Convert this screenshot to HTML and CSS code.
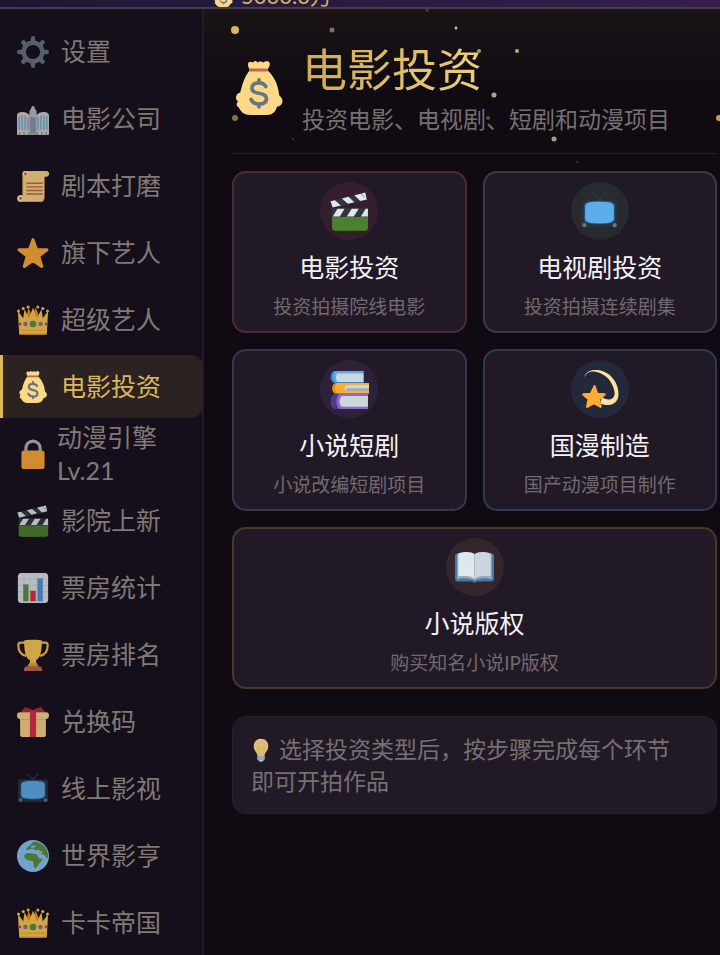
FILE: index.html
```html
<!DOCTYPE html>
<html lang="zh-CN">
<head>
    <meta charset="UTF-8">
    <meta name="viewport" content="width=device-width, initial-scale=1.0">
    <title>电影投资</title>
    <link rel="stylesheet" href="styles.css">
</head>
<body>
    <!-- 图标库 -->
    <svg class="sprite" aria-hidden="true">
        <symbol id="i-gear" viewBox="0 0 36 36">
            <circle cx="18" cy="18" r="10.5" fill="none" stroke="#66757f" stroke-width="5"/>
            <path d="M18 6V2.500M18 30v3.500M6 18H2.500M30 18h3.500M9.500 9.500L7.200 7.200M26.500 9.500l2.300-2.300M9.500 26.500l-2.300 2.300M26.500 26.500l2.300 2.300" stroke="#66757f" stroke-width="5" stroke-linecap="round"/>
        </symbol>
        <symbol id="i-building" viewBox="0 0 36 36">
            <path fill="#d5cdc6" d="M0 14c0-3 3-4 6-4 4 0 6 1 7 3h10c1-2 3-3 7-3 3 0 6 1 6 4v21a1 1 0 0 1-1 1H1a1 1 0 0 1-1-1z"/>
            <path fill="#99aab5" d="M14 12h8v24h-8z"/>
            <path fill="#b6bdc5" d="M14 9c0-1 1.500-1 2-3.500a2 2 0 0 1 4 0c.500 2.500 2 2.500 2 3.500v7h-8z"/>
            <path stroke="#7fb2dc" stroke-width="1.900" d="M2.500 15v15M5.800 14v16M9.100 14v16M12.300 16v14M23.700 16v14M26.900 14v16M30.200 14v16M33.500 15v15"/>
            <path stroke="#7d8b96" stroke-width="1" d="M16 16v17M18 16v17M20 16v17"/>
            <path stroke="#6d8fae" stroke-width="1.300" d="M3 33v3M8 33v3M13 33v3M23 33v3M28 33v3M33 33v3"/>
        </symbol>
        <symbol id="i-scroll" viewBox="0 0 36 36">
            <path fill="#e6aa5f" d="M9 1h23c3 0 4 2 4 3.500S35 8 32 8h-1v23c0 3-1 5-4 5H4c-3 0-4-2-4-4s1.500-4 4-4h2V4c0-2 1-3 3-3z"/>
            <path fill="#ffd983" d="M9 1h23c3 0 4 1.500 4 3s-1 3-4 3h-1.500v22c0 4-1 6-4 6H5c2 0 2-2 2-4V5c0-2 0-4 2-4z"/>
            <circle cx="4" cy="32" r="3.500" fill="#ffe8b6"/><circle cx="4" cy="32" r="1.600" fill="#c1694f"/>
            <circle cx="9.500" cy="4.500" r="3" fill="#ffe8b6"/><circle cx="9.500" cy="4.500" r="1.600" fill="#c1694f"/>
            <path stroke="#c1694f" stroke-width="1.600" d="M10.500 15H29M10.500 19H29M10.500 23H29M10.500 27H29"/>
        </symbol>
        <symbol id="i-star" viewBox="0 0 36 36">
            <path fill="#ffac33" stroke="#ffac33" stroke-width="3.500" stroke-linejoin="round" d="M18 3l4 11 11.700.4-9.200 7.100 3.300 11.500L18 26.500 8.200 33l3.300-11.500-9.200-7.100L14 14z"/>
        </symbol>
        <symbol id="i-crown" viewBox="0 0 36 36">
            <path fill="#f4900c" d="M10 16L13 4l4 10 4-10 5 12z"/>
            <path fill="#ffcc4d" d="M2.500 34L1 8l6 8 1.500-10 5 10L18 4l4.500 12 5-10L29 16l6-8-1.500 26z"/>
            <circle cx="1.700" cy="8" r="1.700" fill="#ffcc4d"/><circle cx="7" cy="5" r="1.700" fill="#ffcc4d"/><circle cx="12.500" cy="3.500" r="1.700" fill="#ffcc4d"/><circle cx="23.500" cy="3.500" r="1.700" fill="#ffcc4d"/><circle cx="29" cy="5" r="1.700" fill="#ffcc4d"/><circle cx="34.300" cy="8" r="1.700" fill="#ffcc4d"/>
            <path fill="#ffac33" d="M3 29h30v1.500H3zM3 33h30v1.500H3z"/>
            <circle cx="18" cy="22.500" r="3.700" fill="#5c913b"/>
            <circle cx="9.500" cy="22.500" r="2.500" fill="#9266cc"/><circle cx="26.500" cy="22.500" r="2.500" fill="#9266cc"/>
            <circle cx="3.300" cy="22.500" r="1.600" fill="#bf3f6b"/><circle cx="32.700" cy="22.500" r="1.600" fill="#bf3f6b"/>
        </symbol>
        <symbol id="i-bag" viewBox="0 0 36 36">
            <path fill="#fdd888" d="M12 6c-1-2-2-3-1-5 1-1 2-.5 3 0 1-1.300 2-1.300 3 0 1-1 3-1 4 0 1-1 3-1.300 4 0 .7 2-.5 3-1.500 5 4 4 7 8 8 17 2 1.500 3 4 1.300 6-.8 1-1.800 1.300-2.800 1.500C29 34 27 36 23 36H12c-4 0-6-2-7.500-5-2-1-1.500-3-.5-4-2-1.500-2-5 1.500-6C7 15 9 9 12 6z"/>
            <path stroke="#bf6952" stroke-width="2" stroke-linecap="round" d="M12.300 6h10.800"/>
            <path fill="none" stroke="#67757f" stroke-width="2.500" stroke-linecap="round" d="M18 12.500v2M18 28.500v2M22.500 17c-1-2-2.500-2.500-4.500-2.500-3 0-4.700 1.500-4.700 3.500 0 2.500 2 3 4.700 3.500 3 .5 5 1.300 5 3.700s-2.200 3.500-5 3.500c-2.500 0-4.200-1-5.200-3"/>
        </symbol>
        <symbol id="i-lock" viewBox="0 0 36 36">
            <path fill="none" stroke="#aab8c2" stroke-width="3.500" d="M10 18v-6.500a8 8 0 0 1 16 0V18"/>
            <rect x="5" y="14" width="26" height="21" rx="3" fill="#ffac33"/>
        </symbol>
        <symbol id="i-clapper" viewBox="0 0 36 36">
            <path fill="#3e721d" d="M2 20h33v13a3 3 0 0 1-3 3H5a3 3 0 0 1-3-3z"/>
            <path fill="#4c8031" d="M2 22h33v10a3 3 0 0 1-3 3H5a3 3 0 0 1-3-3z"/>
            <path fill="#31373d" d="M2 15h33v8H2z"/>
            <path fill="#31373d" d="M.5 8.500L32.500.5l1.500 7-32 7z"/>
            <path fill="#e1e8ed" d="M.5 8.500l4-1 5.500 5-7.500 1.900zM11 5.900l6-1.500 5.500 5-6 1.500zM22.500 3l6-1.500 5.500 5.500-6 1.300zM29 1.400l3.500-.9L34 7zM7 15.500h6.500L9 22.500H2.500zM20 15.500h6.500L22 22.500h-6.500zM33 15.500h2v7h-6.500z"/>
        </symbol>
        <symbol id="i-chart" viewBox="0 0 36 36">
            <rect x="1" y="1" width="34" height="34" rx="4" fill="#e1e8ed"/>
            <path stroke="#ccd6dd" stroke-width="1" d="M1 8h34M1 15h34M1 22h34M1 29h34M8 1v34M15 1v34M22 1v34M29 1v34"/>
            <path fill="#5c913b" d="M7 14h6v19H7z"/><path fill="#dd2e44" d="M15 21h6v12h-6z"/><path fill="#5595d6" d="M23 7h6v26h-6z"/>
        </symbol>
        <symbol id="i-trophy" viewBox="0 0 36 36">
            <path fill="none" stroke="#ffbd40" stroke-width="2.500" d="M10 4H4C2 4 1.500 5 1.500 7c0 6 3 11 9 12M26 4h6c2 0 2.500 1 2.500 3 0 6-3 11-9 12"/>
            <path fill="#ffcc4d" d="M8 2c0-1.500 20-1.500 20 0 0 9-1 19-6.500 22-.5 2 .5 5 2.500 7H12c2-2 3-5 2.500-7C9 21 8 11 8 2z"/>
            <path fill="#f4a03c" d="M14 27h8l2.500 4h-13z"/>
            <path fill="#c1694f" d="M10 31h16c1 0 2 1 2.500 5h-21C8 32 9 31 10 31z"/>
        </symbol>
        <symbol id="i-gift" viewBox="0 0 36 36">
            <path fill="#bf1f3f" d="M4 7l5-6 6 2 3 2 3-2 6-2 5 6z"/>
            <path fill="#fdd888" d="M3.500 12h29v20a3 3 0 0 1-3 3h-23a3 3 0 0 1-3-3z"/>
            <rect x="0" y="7" width="36" height="7.500" rx="3.500" fill="#fdd888"/>
            <path fill="#e8bd70" d="M3.500 14.500h29v1.500h-29z"/>
            <path fill="#dd2e44" d="M14.500 5h7v30h-7z"/>
        </symbol>
        <symbol id="i-tv" viewBox="0 0 36 36">
            <path fill="none" stroke="#31373d" stroke-width="1.300" stroke-linecap="round" d="M18 7L11 1M18 7l6-6"/>
            <rect x="1" y="7" width="34" height="26" rx="2" fill="#292f33"/>
            <path fill="#225177" d="M3.500 13c0-4 3-5 14.500-5s14.500 1 14.500 5v12c0 4-4 5-14.500 5s-14.500-1-14.500-5z"/>
            <path fill="#5dadec" d="M4.700 14c0-4 3.300-5 13.300-5s13.300 1 13.300 5v10c0 4-3.300 5-13.300 5s-13.300-1-13.300-5z"/>
            <circle cx="4" cy="30.500" r="2" fill="#66757f"/><circle cx="32" cy="30.500" r="2" fill="#66757f"/>
        </symbol>
        <symbol id="i-globe" viewBox="0 0 36 36">
            <circle cx="18" cy="18" r="18" fill="#88c9f9"/>
            <path fill="#5c913b" d="M10 11c1-3 3-3 5-5l3-4c7-1 13 4 16 10l1.500 6-2 3-2.500-4-3-1-3-5-4 .5-3-2-5 1.500z"/>
            <path fill="#5c913b" d="M8 18c1-3 4-4 7-3l7 1 3 5h4c-1 4-4 4-5 7l-3 4c-3-1-2-5-3-8-3-1-10-1-10-6z"/>
            <path fill="#88c9f9" d="M16 7l4-1 1 2-5 1zM24 12l5 1-1 2z"/>
        </symbol>
        <symbol id="i-books" viewBox="0 0 36 36">
            <path fill="#3b88c3" d="M4 1h27v11H4C-.5 11 -.5 2 4 1z"/><path fill="#55acee" d="M5 1h26v2H8c-3 1-3 7 0 8H5C2 10 2 2 5 1z"/>
            <path fill="#ccd6dd" d="M7 3h24v8H7c-2-1-2-7 0-8z"/>
            <path fill="#f4900c" d="M5 12h31v2H7v8H5c-4-1-4-9 0-10z"/><path fill="#ffac33" d="M7 12h29v10H7c-3-2-3-8 0-10z"/>
            <path fill="#ccd6dd" d="M15 14h21v5H15c-2-1-2-4 0-5z"/><path fill="#99aab5" d="M15 17h21v2H15z"/>
            <path fill="#553788" d="M5 22h30v14H5c-6-1-6-13 0-14z"/><path fill="#9266cc" d="M9 22h26v14H9c-4-2-4-12 0-14z"/>
            <path fill="#ccd6dd" d="M11 24h24v10H11c-3-2-3-8 0-10z"/>
        </symbol>
        <symbol id="i-dizzy" viewBox="0 0 36 36">
            <path fill="#ffe1a0" d="M4 7C5-1 17-2 25 3c8 5 12 15 10 23-2 6-10 8-16 5l1-6c4 3 12 4 12-4C31 13 26 6 19 3 12 0 6 1 4 7z"/>
            <path fill="#ffac33" stroke="#ffac33" stroke-width="2" stroke-linejoin="round" d="M13.500 15l2.300 7 7 .5-5.300 4.500 1.500 7-6-3.500L6.500 34 8 27l-5-4.500 7-.5z"/>
        </symbol>
        <symbol id="i-openbook" viewBox="0 0 36 36">
            <path fill="#3f7ba8" d="M0 7c0-1 1-2 2-2h32c1 0 2 1 2 2v21c0 2-1 3-2 3H20c-1 1.500-3 1.500-4 0H2c-1 0-2-1-2-3z"/>
            <path fill="#99aab5" d="M2 6h32v23c-6-2-12-1-16 1-4-2-10-3-16-1z"/>
            <path fill="#e1e8ed" d="M18 6C15 3 9 3.500 3 5v21c6-1 12-.5 15 2.500z"/>
            <path fill="#ccd6dd" d="M18 6c3-3 9-2.500 15-1v21c-6-1-12-.5-15 2.500z"/>
            <path stroke="#aebbc5" stroke-width=".8" d="M18 6v23"/>
        </symbol>
        <symbol id="i-bulb" viewBox="0 0 24 36">
            <path fill="#ffd983" d="M12 1C5 1 1 6 1 12c0 7 5 9 6 15h10c1-6 6-8 6-15 0-6-4-11-11-11z"/>
            <path fill="none" stroke="#ffcc4d" stroke-width="1.500" d="M9 26c0-6-2-8-2-11 3-2 4 1 5 1s2-3 5-1c0 3-2 5-2 11"/>
            <path fill="#ccd6dd" d="M6.500 26h11v5c0 2-1 2-2 3-1 2-6 2-7 0-1-1-2-1-2-3z"/>
            <path stroke="#99aab5" stroke-width="1.500" d="M6.500 28.500h11M7 31.500h10"/>
        </symbol>
    </svg>

    <header class="topbar">
        <svg class="coin-icon"><use href="#i-bag"/></svg>
        <span class="coin-value">5000.0万</span>
    </header>

    <div class="layout">
        <nav class="sidebar">
            <a class="nav-item" href="#"><svg class="nav-icon"><use href="#i-gear"/></svg><span>设置</span></a>
            <a class="nav-item" href="#"><svg class="nav-icon"><use href="#i-building"/></svg><span>电影公司</span></a>
            <a class="nav-item" href="#"><svg class="nav-icon"><use href="#i-scroll"/></svg><span>剧本打磨</span></a>
            <a class="nav-item" href="#"><svg class="nav-icon"><use href="#i-star"/></svg><span>旗下艺人</span></a>
            <a class="nav-item" href="#"><svg class="nav-icon"><use href="#i-crown"/></svg><span>超级艺人</span></a>
            <a class="nav-item active" href="#"><svg class="nav-icon"><use href="#i-bag"/></svg><span>电影投资</span></a>
            <a class="nav-item locked" href="#"><svg class="nav-icon"><use href="#i-lock"/></svg><span>动漫引擎 Lv.21</span></a>
            <a class="nav-item" href="#"><svg class="nav-icon"><use href="#i-clapper"/></svg><span>影院上新</span></a>
            <a class="nav-item" href="#"><svg class="nav-icon"><use href="#i-chart"/></svg><span>票房统计</span></a>
            <a class="nav-item" href="#"><svg class="nav-icon"><use href="#i-trophy"/></svg><span>票房排名</span></a>
            <a class="nav-item" href="#"><svg class="nav-icon"><use href="#i-gift"/></svg><span>兑换码</span></a>
            <a class="nav-item" href="#"><svg class="nav-icon"><use href="#i-tv"/></svg><span>线上影视</span></a>
            <a class="nav-item" href="#"><svg class="nav-icon"><use href="#i-globe"/></svg><span>世界影亨</span></a>
            <a class="nav-item" href="#"><svg class="nav-icon"><use href="#i-crown"/></svg><span>卡卡帝国</span></a>
        </nav>

        <main class="content">
            <!-- 背景金色粒子 -->
            <svg class="particles" aria-hidden="true">
                <circle cx="31" cy="21" r="4" fill="#d9b85c"/>
                <circle cx="128" cy="21" r="2.500" fill="#857248"/>
                <circle cx="223" cy="1" r="2" fill="#3f3430"/>
                <circle cx="252" cy="19" r="1.500" fill="#c4bfb5"/>
                <circle cx="275" cy="42" r="2" fill="#b39a55"/>
                <circle cx="313" cy="42" r="2" fill="#c2a874"/>
                <circle cx="290" cy="86" r="2.500" fill="#b8a77c"/>
                <circle cx="284" cy="109" r="2" fill="#5f5136"/>
                <circle cx="350" cy="130" r="2.500" fill="#ab9c74"/>
                <circle cx="31" cy="109" r="3" fill="#85713f"/>
                <circle cx="515" cy="109" r="3" fill="#c99c3d"/>
                <circle cx="89" cy="130" r="1" fill="#40363b"/>
                <circle cx="373" cy="153" r="1.500" fill="#2c262d"/>
            </svg>

            <div class="page-header">
                <svg class="page-icon"><use href="#i-bag"/></svg>
                <div>
                    <h1>电影投资</h1>
                    <p class="subtitle">投资电影、电视剧、短剧和动漫项目</p>
                </div>
            </div>

            <div class="card-grid">
                <button type="button" class="card red">
                    <span class="card-icon"><svg><use href="#i-clapper"/></svg></span>
                    <span class="card-title">电影投资</span>
                    <span class="card-desc">投资拍摄院线电影</span>
                </button>
                <button type="button" class="card green">
                    <span class="card-icon"><svg><use href="#i-tv"/></svg></span>
                    <span class="card-title">电视剧投资</span>
                    <span class="card-desc">投资拍摄连续剧集</span>
                </button>
                <button type="button" class="card purple">
                    <span class="card-icon"><svg><use href="#i-books"/></svg></span>
                    <span class="card-title">小说短剧</span>
                    <span class="card-desc">小说改编短剧项目</span>
                </button>
                <button type="button" class="card blue">
                    <span class="card-icon"><svg><use href="#i-dizzy"/></svg></span>
                    <span class="card-title">国漫制造</span>
                    <span class="card-desc">国产动漫项目制作</span>
                </button>
                <button type="button" class="card wide orange">
                    <span class="card-icon"><svg><use href="#i-openbook"/></svg></span>
                    <span class="card-title">小说版权</span>
                    <span class="card-desc">购买知名小说IP版权</span>
                </button>
            </div>

            <p class="tip"><svg class="tip-icon"><use href="#i-bulb"/></svg>选择投资类型后，按步骤完成每个环节即可开拍作品</p>
        </main>
    </div>
</body>
</html>
```
FILE: styles.css
```css
* { box-sizing: border-box; }
body { margin: 0; background: #100b12; color: #817877; font-family: Lato, "Noto Sans CJK SC", sans-serif; min-height: 100vh; display: flex; flex-direction: column; }
h1, p { margin: 0; }
.sprite { position: absolute; width: 0; height: 0; }

/* 顶部资源栏 */
.topbar { height: 9px; overflow: hidden; display: flex; align-items: flex-end; gap: 7px; padding-left: 213px; background: linear-gradient(90deg, #1b1737, #36204a); border-bottom: 2px solid #4b3c46; }
.coin-icon { width: 21px; height: 21px; flex: none; }
.coin-value { font-size: 22px; line-height: 23px; color: #d5b25c; white-space: nowrap; }

.layout { flex: 1; display: flex; }

/* 左侧菜单 */
.sidebar { flex: none; width: 204px; padding-top: 11px; display: flex; flex-direction: column; gap: 4px; background: #150f1b; border-right: 2px solid #221a26; }
.nav-item { height: 63px; margin-right: -1px; padding-left: 14px; border-left: 3px solid transparent; display: flex; align-items: center; gap: 12px; font-size: 25px; line-height: 33px; color: #827876; text-decoration: none; }
.nav-icon { width: 32px; height: 32px; flex: none; opacity: 0.8; }
.nav-item.active { background: #2c2221; color: #dab75a; border-left-color: #dcb75a; border-radius: 0 12px 12px 0; }
.nav-item.active .nav-icon { opacity: 1; }
.nav-item.locked { gap: 8px; padding-right: 32px; }

/* 主内容 */
.content { position: relative; flex: 1; min-width: 0; padding: 31px 3px 0 28px; background: linear-gradient(#1a1417, #100b12 80px); }
.particles { position: absolute; top: 0; left: 0; width: 100%; height: 180px; pointer-events: none; }
.page-header { display: flex; align-items: center; gap: 16px; padding-bottom: 18px; margin-bottom: 17px; border-bottom: 1px solid #251e26; }
.page-icon { width: 54px; height: 54px; flex: none; }
h1 { width: fit-content; font-size: 45px; line-height: 60px; font-weight: 400; color: transparent; background: linear-gradient(90deg, #d0aa50, #ebd078); -webkit-background-clip: text; background-clip: text; }
.subtitle { margin-top: 3px; font-size: 23px; line-height: 32px; color: #777071; }

.card-grid { display: grid; grid-template-columns: 1fr 1fr; gap: 16px; }
.card { display: flex; flex-direction: column; align-items: center; gap: 10px; padding: 9px 0 11px; background: #221926; border: 2px solid; border-radius: 14px; font-family: inherit; cursor: pointer; }
.card.wide { grid-column: 1 / -1; }
.card-icon { width: 58px; height: 58px; border-radius: 50%; display: flex; align-items: center; justify-content: center; }
.card-icon svg { width: 39px; height: 39px; }
.card-title { font-size: 25px; line-height: 34px; color: #f5f2f7; }
.card-desc { font-size: 19px; line-height: 26px; color: #72696f; }
.card.red { border-color: #4a2a37; }
.card.red .card-icon { background: #351f2c; }
.card.green { border-color: #373d40; }
.card.green .card-icon { background: #272b30; }
.card.purple { border-color: #40324f; }
.card.purple .card-icon { background: #2e223b; }
.card.blue { border-color: #2d3c50; }
.card.blue .card-icon { background: #24283b; }
.card.orange { border-color: #4a382f; }
.card.orange .card-icon { background: #35262b; }

.tip { margin-top: 27px; padding: 16px 28px 16px 18px; background: #211926; border: 1px solid #2a222b; border-radius: 14px; font-size: 23px; line-height: 32px; color: #777071; }
.tip-icon { width: 16px; height: 24px; margin: 0 10px 0 2px; vertical-align: -4px; opacity: 0.85; }
```
